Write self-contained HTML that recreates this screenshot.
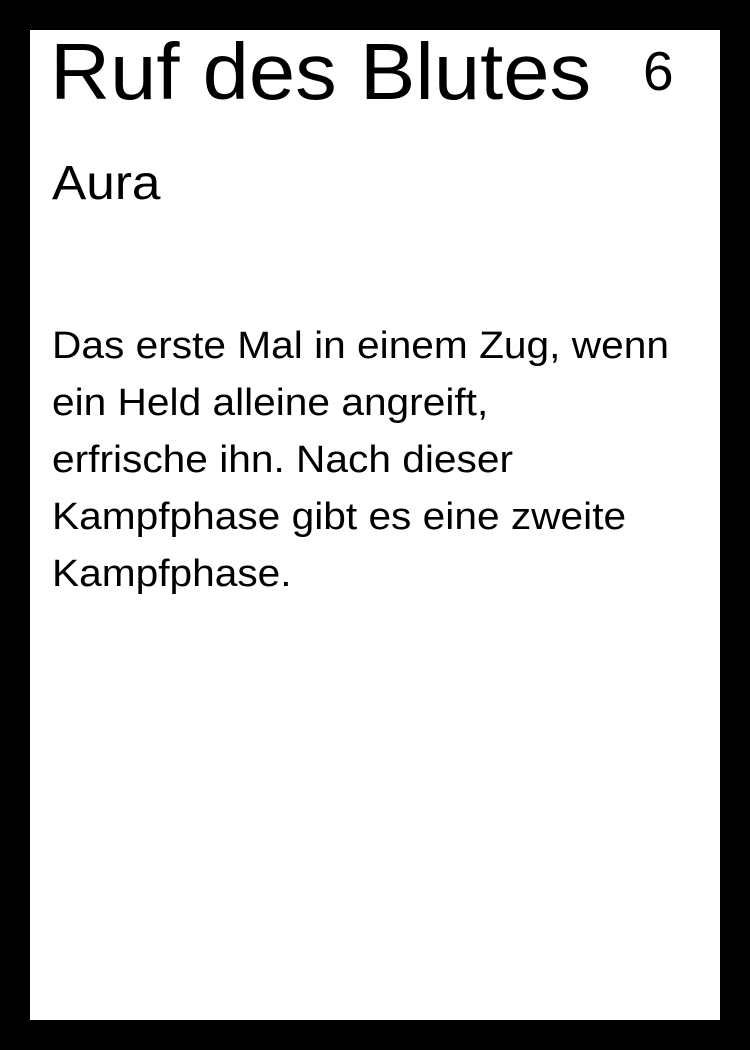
<!DOCTYPE html>
<html><head><meta charset="utf-8"><style>
html,body{margin:0;padding:0;}
body{width:750px;height:1050px;background:#000;position:relative;overflow:hidden;font-family:"Comic Sans MS","Liberation Sans",sans-serif;color:#000;}
.card{position:absolute;left:30px;top:30px;width:690px;height:990px;background:#fff;}
.t{position:absolute;white-space:nowrap;line-height:1;transform-origin:left top;}
</style></head><body>
<div class="card"></div>
<div class="t" style="left:50px;top:32px;font-size:80px;transform:scaleX(1.04);">Ruf des Blutes</div>
<div class="t" style="left:643px;top:44px;font-size:55px;">6</div>
<div class="t" style="left:52px;top:160px;font-size:48px;transform:scaleX(1.07);">Aura</div>
<div class="t" style="left:52px;top:318px;font-size:38px;line-height:57px;transform:scaleX(1.07);">Das erste Mal in einem Zug, wenn<br>ein Held alleine angreift,<br>erfrische ihn. Nach dieser<br>Kampfphase gibt es eine zweite<br>Kampfphase.</div>
</body></html>
